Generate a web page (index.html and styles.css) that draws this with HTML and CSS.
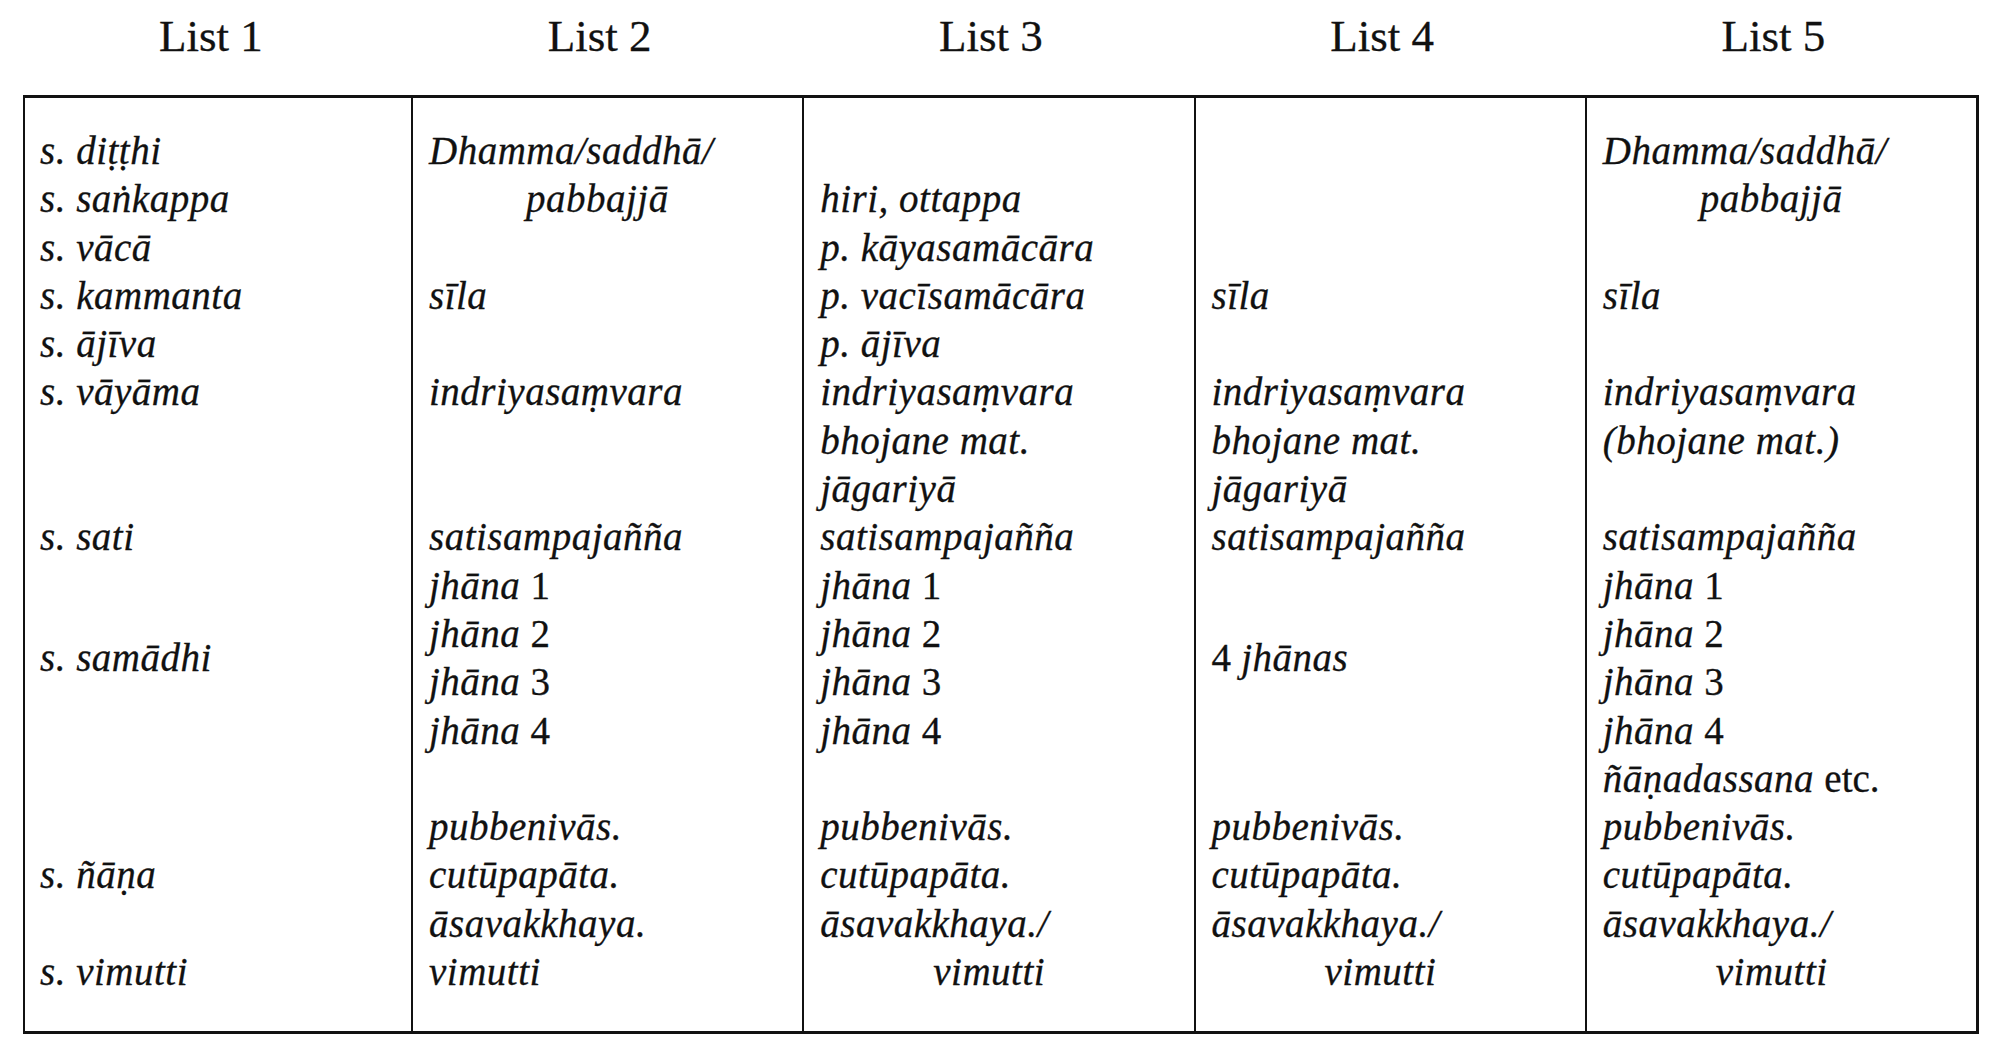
FILE: index.html
```html
<!DOCTYPE html>
<html lang="pi">
<head>
<meta charset="utf-8">
<title>Lists</title>
<link rel="stylesheet" href="styles.css">
</head>
<body>
<div class="page">
  <div class="heads">
    <div class="head">List 1</div>
    <div class="head">List 2</div>
    <div class="head">List 3</div>
    <div class="head">List 4</div>
    <div class="head">List 5</div>
  </div>
  <div class="table">
    <div class="col">
      <div class="ln">s. diṭṭhi</div>
      <div class="ln">s. saṅkappa</div>
      <div class="ln">s. vācā</div>
      <div class="ln">s. kammanta</div>
      <div class="ln">s. ājīva</div>
      <div class="ln">s. vāyāma</div>
      <div class="ln"></div>
      <div class="ln"></div>
      <div class="ln">s. sati</div>
      <div class="ln"></div>
      <div class="ln2">s. samādhi</div>
      <div class="ln"></div>
      <div class="ln"></div>
      <div class="ln"></div>
      <div class="ln">s. ñāṇa</div>
      <div class="ln"></div>
      <div class="ln">s. vimutti</div>
    </div>
    <div class="col">
      <div class="ln">Dhamma/saddhā/</div>
      <div class="ln in1">pabbajjā</div>
      <div class="ln"></div>
      <div class="ln">sīla</div>
      <div class="ln"></div>
      <div class="ln">indriyasaṃvara</div>
      <div class="ln"></div>
      <div class="ln"></div>
      <div class="ln">satisampajañña</div>
      <div class="ln">jhāna <span class="rm">1</span></div>
      <div class="ln">jhāna <span class="rm">2</span></div>
      <div class="ln">jhāna <span class="rm">3</span></div>
      <div class="ln">jhāna <span class="rm">4</span></div>
      <div class="ln"></div>
      <div class="ln">pubbenivās.</div>
      <div class="ln">cutūpapāta.</div>
      <div class="ln">āsavakkhaya.</div>
      <div class="ln">vimutti</div>
    </div>
    <div class="col">
      <div class="ln"></div>
      <div class="ln">hiri, ottappa</div>
      <div class="ln">p. kāyasamācāra</div>
      <div class="ln">p. vacīsamācāra</div>
      <div class="ln">p. ājīva</div>
      <div class="ln">indriyasaṃvara</div>
      <div class="ln">bhojane mat.</div>
      <div class="ln">jāgariyā</div>
      <div class="ln">satisampajañña</div>
      <div class="ln">jhāna <span class="rm">1</span></div>
      <div class="ln">jhāna <span class="rm">2</span></div>
      <div class="ln">jhāna <span class="rm">3</span></div>
      <div class="ln">jhāna <span class="rm">4</span></div>
      <div class="ln"></div>
      <div class="ln">pubbenivās.</div>
      <div class="ln">cutūpapāta.</div>
      <div class="ln">āsavakkhaya./</div>
      <div class="ln in2">vimutti</div>
    </div>
    <div class="col">
      <div class="ln"></div>
      <div class="ln"></div>
      <div class="ln"></div>
      <div class="ln">sīla</div>
      <div class="ln"></div>
      <div class="ln">indriyasaṃvara</div>
      <div class="ln">bhojane mat.</div>
      <div class="ln">jāgariyā</div>
      <div class="ln">satisampajañña</div>
      <div class="ln"></div>
      <div class="ln2"><span class="rm">4</span>&nbsp;jhānas</div>
      <div class="ln"></div>
      <div class="ln"></div>
      <div class="ln">pubbenivās.</div>
      <div class="ln">cutūpapāta.</div>
      <div class="ln">āsavakkhaya./</div>
      <div class="ln in2">vimutti</div>
    </div>
    <div class="col">
      <div class="ln">Dhamma/saddhā/</div>
      <div class="ln in1">pabbajjā</div>
      <div class="ln"></div>
      <div class="ln">sīla</div>
      <div class="ln"></div>
      <div class="ln">indriyasaṃvara</div>
      <div class="ln">(bhojane mat.)</div>
      <div class="ln"></div>
      <div class="ln">satisampajañña</div>
      <div class="ln">jhāna <span class="rm">1</span></div>
      <div class="ln">jhāna <span class="rm">2</span></div>
      <div class="ln">jhāna <span class="rm">3</span></div>
      <div class="ln">jhāna <span class="rm">4</span></div>
      <div class="ln">ñāṇadassana <span class="rm">etc.</span></div>
      <div class="ln">pubbenivās.</div>
      <div class="ln">cutūpapāta.</div>
      <div class="ln">āsavakkhaya./</div>
      <div class="ln in2">vimutti</div>
    </div>
  </div>
</div>
</body>
</html>
```

FILE: styles.css
```css
html, body {
  margin: 0;
  padding: 0;
  background: #ffffff;
}

body {
  color: #111111;
  font-family: "Liberation Serif", "Times New Roman", serif;
}

.page {
  width: 1956px;
  margin-left: 23px;
}

.heads {
  display: grid;
  grid-template-columns: 386px repeat(4, 1fr);
  height: 95px;
  padding-left: 2px;
  padding-right: 3px;
}

.head {
  text-align: center;
  font-size: 45px;
  line-height: 48px;
  padding-top: 12px;
  padding-right: 14px;
  -webkit-text-stroke: 0.3px #111111;
}

.table {
  display: grid;
  grid-template-columns: 386px repeat(4, 1fr);
  border-top: 3px solid #111111;
  border-bottom: 3px solid #111111;
  border-left: 2px solid #111111;
  border-right: 3px solid #111111;
}

.col {
  padding: 29px 6px 35px 15px;
  font-style: italic;
  font-size: 39px;
  letter-spacing: 0.5px;
  -webkit-text-stroke: 0.3px #111111;
  min-width: 0;
}

.col + .col {
  border-left: 2px solid #111111;
  padding-left: 16px;
}

.ln {
  height: 48.3px;
  line-height: 48.3px;
  white-space: nowrap;
}

.ln2 {
  height: 96.6px;
  line-height: 48.3px;
  display: flex;
  align-items: center;
  white-space: nowrap;
}

.in1 {
  padding-left: 97px;
}

.in2 {
  padding-left: 113px;
}

.rm {
  font-style: normal;
  letter-spacing: 0;
}
```
